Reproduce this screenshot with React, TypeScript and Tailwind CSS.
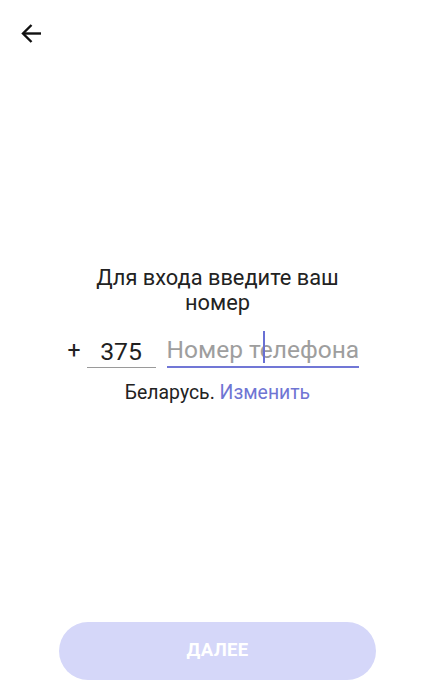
import React from "react";

export default function App() {
  return (
    <div
      className="w-[435px] h-[700px] bg-white flex flex-col relative overflow-hidden"
      style={{ fontFamily: "Roboto, 'Noto Sans', sans-serif" }}
    >
      <div className="pl-[20px] pt-[23px] h-[60px]">
        <svg width="22" height="21" viewBox="0 0 22 21" fill="none">
          <path d="M21 10.5H3.5" stroke="#111" strokeWidth="2.4" />
          <path d="M11.5 2L3 10.5L11.5 19" stroke="#111" strokeWidth="2.4" strokeLinejoin="miter" />
        </svg>
      </div>
      <div className="flex flex-col items-center mt-[205px]">
        <div className="text-[21.8px] leading-[25px] text-[#222] text-center w-[280px]">
          Для входа введите ваш номер
        </div>
        <div className="flex items-end mt-[21px] ml-[-9px]">
          <span className="text-[23px] text-[#222] pb-[3px] mr-[6px] leading-[28px]">+</span>
          <div className="w-[69px] border-b border-[#9a9a9a] flex justify-center pb-[1px]">
            <span className="text-[24.8px] leading-[28px] text-[#1f1f1f]">375</span>
          </div>
          <div className="ml-[11px] w-[192px] border-b-2 border-[#7177d6] pb-[1px] relative">
            <span className="text-[24.5px] leading-[28px] text-[#9e9e9e] whitespace-nowrap">Номер телефона</span>
            <div className="absolute left-[96px] top-[-5px] w-[2px] h-[32px] bg-[#6970d4]" />
          </div>
        </div>
        <div className="mt-[13px] text-[19.4px] leading-[24px] text-[#222]">
          Беларусь. <span className="text-[#6f75d3]">Изменить</span>
        </div>
      </div>
      <div className="flex-1" />
      <div className="flex justify-center mb-[20px]">
        <div className="w-[317px] h-[58px] rounded-full bg-[#d5d7f9] flex items-center justify-center">
          <span className="text-white font-bold text-[18.5px] tracking-[0.3px]">ДАЛЕЕ</span>
        </div>
      </div>
    </div>
  );
}
